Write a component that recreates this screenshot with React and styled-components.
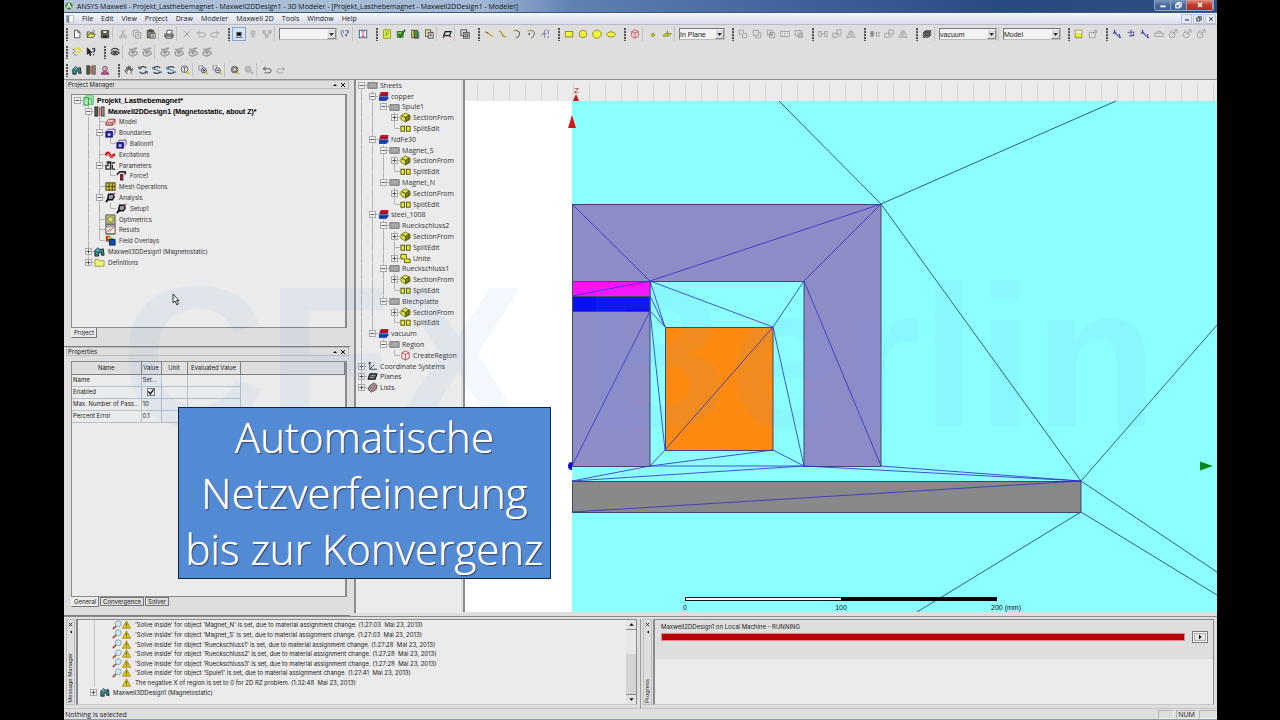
import React, { useState } from "react";
import styled, { createGlobalStyle } from "styled-components";

const GlobalStyle = createGlobalStyle`
  * { box-sizing: border-box; }
  html, body, #root { height: 100%; }
  body { margin: 0; background: #000; overflow: hidden; }
  button, select, input { font: inherit; color: inherit; margin: 0; padding: 0; }
  ul { list-style: none; margin: 0; padding: 0; }
`;

const Screen = styled.div`
  height: 100vh;
  padding: 0 63px 0 64px;
  background: #000;
`;

const Window = styled.div`
  position: relative;
  display: flex;
  flex-direction: column;
  height: 100%;
  overflow: hidden;
  background: #dedede;
  color: #222;
  font-family: Inter, "Liberation Sans", Arial, sans-serif;
  font-size: 6px;
  line-height: 9px;
`;

const TitleBar = styled.header`
  display: flex;
  align-items: center;
  flex: 0 0 13px;
  gap: 3px;
  padding: 0 3px 0 0;
  border-bottom: 1px solid #3c587e;
  background: linear-gradient(90deg, #b3c3d8 0%, #a3b9d6 36%, #5f82b3 44%, #3d6099 65%, #264b80 82%, #2c5080 100%);
  color: #111;
  font-family: "Open Sans", "Noto Sans", sans-serif;
  h1 {
    flex: 1;
    margin: 0;
    font-size: 7px;
    font-weight: 400;
    white-space: nowrap;
  }
`;

const WindowButtons = styled.div`
  display: flex;
  align-self: flex-start;
  border: 1px solid #8fa6c4;
  border-top: 0;
  border-radius: 0 0 3px 3px;
  overflow: hidden;
`;

const CaptionButton = styled.button`
  display: grid;
  place-items: center;
  width: ${(p) => (p.$close ? "26px" : "16px")};
  height: 10px;
  border: 0;
  border-right: 1px solid #8fa6c4;
  background: ${(p) =>
    p.$close
      ? "linear-gradient(#dd9588, #c23a28 50%, #b02a20)"
      : "linear-gradient(#7c98bd, #4a6c9a 50%, #3f628f)"};
`;

const MenuBar = styled.nav`
  display: flex;
  align-items: center;
  flex: 0 0 12px;
  padding: 0 1px 0 2px;
  border-bottom: 1px solid #b9bcc4;
  background: linear-gradient(#f4f6fb, #d8dcea);
  font-family: "Open Sans", "Noto Sans", sans-serif;
`;

const MenuItem = styled.button`
  margin-left: 8px;
  border: 0;
  background: none;
  font-size: 7px;
  line-height: 9px;
  white-space: nowrap;
`;

const MdiButtons = styled.div`
  display: flex;
  gap: 1px;
  margin-left: auto;
`;

const MdiButton = styled.button`
  display: grid;
  place-items: center;
  width: 11px;
  height: 10px;
  border: 1px solid #b9c4d8;
  background: #e4ebf6;
`;

const ToolRow = styled.div`
  display: flex;
  align-items: center;
  flex: 0 0 18px;
  overflow: hidden;
`;

const Grip = styled.span`
  flex: none;
  width: ${(p) => (p.$first ? "6px" : "10px")};
  height: 13px;
  padding-right: 2px;
  display: flex;
  justify-content: flex-end;
  &::before {
    content: "";
    width: 2px;
    background: repeating-linear-gradient(#555 0 2px, #c4c4c4 2px 3px);
  }
`;

const Divider = styled.span`
  flex: none;
  width: 4px;
  height: 14px;
  border-left: 1px solid #c2c2c2;
`;

const ToolButton = styled.button`
  display: grid;
  place-items: center;
  flex: none;
  width: 14px;
  height: 14px;
  border: ${(p) => (p.$on ? "1px solid #7fa6dc" : "0")};
  background: ${(p) => (p.$on ? "#d5e3f6" : "none")};
`;

const Combo = styled.label`
  display: flex;
  flex: none;
  width: ${(p) => p.$width};
  height: 12px;
  margin: 0 1px;
  border: 1px solid #777;
  border-right-color: #bbb;
  border-bottom-color: #bbb;
  background: #f3f3f3;
  select {
    flex: 1;
    min-width: 0;
    border: 0;
    appearance: none;
    background: none;
    font-family: "Liberation Sans", Arial, sans-serif;
    font-size: 7px;
    line-height: 9px;
  }
  span {
    display: grid;
    place-items: center;
    width: 9px;
    border: 1px solid #888;
    border-left-color: #eee;
    border-top-color: #eee;
    background: #dcdcdc;
  }
`;

const Work = styled.main`
  display: flex;
  flex: 1;
  min-height: 0;
  border-top: 1px solid #8f8f8f;
`;

const LeftDock = styled.aside`
  display: flex;
  flex-direction: column;
  flex: 0 0 286px;
`;

const Panel = styled.section`
  display: flex;
  flex-direction: column;
  flex: ${(p) => p.$share};
  min-height: 0;
  padding: 0 1px 8px 2px;
  border-bottom: 1px solid #808080;
`;

const PanelHeader = styled.div`
  display: flex;
  align-items: center;
  flex: 0 0 9px;
  gap: 2px;
  padding: 0 2px 0 1px;
  border: 1px solid #bdbdbd;
  h2 {
    flex: 1;
    margin: 0;
    font-size: 6px;
    line-height: 7px;
    font-weight: 400;
  }
`;

const TinyButton = styled.button`
  display: grid;
  place-items: center;
  width: 6px;
  height: 6px;
  border: 0;
  background: none;
`;

const PanelBody = styled.div`
  flex: 1;
  min-height: 0;
  margin: 5px 2px 0 5px;
  border: 1px solid #8a8a8a;
  border-right-width: 2px;
  background: #ebebeb;
  overflow: hidden;
`;

const Tabs = styled.div`
  display: flex;
  flex: 0 0 10px;
  align-items: flex-start;
  gap: 1px;
  padding-left: 5px;
`;

const Tab = styled.button`
  height: ${(p) => (p.$active ? "10px" : "9px")};
  padding: 0 2px;
  border: 1px solid #777;
  border-top: ${(p) => (p.$active ? "0" : "1px solid #777")};
  border-left-color: ${(p) => (p.$active ? "#eee" : "#777")};
  background: ${(p) => (p.$active ? "#ebebeb" : "#dedede")};
  line-height: 7px;
`;

const TreeDock = styled.aside`
  flex: 0 0 107px;
  margin: 0 2px 3px 4px;
  border-left: 2px solid #8c8c8c;
  background: #ebebeb;
  overflow: hidden;
`;

const line = "linear-gradient(#b4b4b4, #b4b4b4)";
const none = "linear-gradient(transparent, transparent)";

const TreeRow = styled.li`
  display: flex;
  align-items: center;
  height: 1.5vh;
  white-space: nowrap;
  font-family: ${(p) => (p.$ui ? '"Open Sans", "Noto Sans", sans-serif' : p.$bold ? '"Liberation Sans", Arial, sans-serif' : "inherit")};
  font-size: ${(p) => (p.$ui || p.$bold ? "7px" : "6px")};
  font-weight: ${(p) => (p.$bold ? 700 : 400)};
  color: ${(p) => (p.$bold ? "#000" : "#333")};
  > svg {
    flex: none;
    margin-right: ${(p) => (p.$ui ? "2px" : "3px")};
  }
`;

const Guide = styled.span`
  display: grid;
  place-items: center;
  align-self: stretch;
  flex: none;
  width: 11px;
  background-repeat: no-repeat;
  background-image: ${(p) => (p.$up ? line : none)}, ${(p) => (p.$down ? line : none)}, ${(p) => (p.$branch ? line : none)};
  background-position: 5px 0, 5px 100%, 100% 50%;
  background-size: 1px 50%, 1px 50%, 5px 1px;
`;

const Toggle = styled.button`
  display: grid;
  place-items: center;
  width: 7px;
  height: 7px;
  border: 1px solid #aaa;
  background: #f2f2f2;
`;

const Grid = styled.table`
  width: 100%;
  table-layout: fixed;
  border-collapse: collapse;
  line-height: 8px;
  th, td {
    height: 12px;
    padding: 0 1px;
    border-right: 1px solid #b4c0cc;
    border-bottom: 1px solid #b4c0cc;
    font-weight: 400;
    text-align: left;
    white-space: nowrap;
    overflow: hidden;
  }
  thead th {
    border-color: #808080;
    background: #dedede;
    text-align: center;
  }
  tbody td:last-child { border: 0; }
  input {
    display: block;
    margin: 0 auto;
    width: 8px;
    height: 8px;
    appearance: none;
    border: 1px solid #777;
    background: #fff;
  }
`;

const CheckCell = styled.label`
  display: grid;
  justify-content: center;
  > * { grid-area: 1 / 1; }
`;

const Viewport = styled.section`
  flex: 1;
  min-width: 0;
  margin-bottom: 4px;
  border-left: 2px solid #8c8c8c;
  background: #fff;
  overflow: hidden;
  svg {
    display: block;
    width: 100%;
    height: 100%;
  }
`;

const BottomDock = styled.div`
  display: flex;
  flex: 0 0 92px;
  min-height: 0;
  border-top: 1px solid #8a8a8a;
  padding-top: 2px;
`;

const DockPane = styled.section`
  display: flex;
  flex: 1;
  min-width: 0;
  padding: 0 3px 3px 2px;
  border-right: 1px solid #999;
  &:last-child {
    border-right: 0;
  }
`;

const SideStrip = styled.div`
  display: flex;
  flex-direction: column;
  align-items: center;
  flex: 0 0 9px;
  gap: 2px;
  padding: 1px 0;
  border: 1px solid #bdbdbd;
  h2 {
    margin: auto 0 0;
    font-family: "Liberation Sans", Arial, sans-serif;
    font-size: 6px;
    line-height: 7px;
    font-weight: 400;
    writing-mode: vertical-rl;
    transform: rotate(180deg);
    white-space: nowrap;
  }
`;

const DockBody = styled.div`
  display: flex;
  flex: 1;
  min-width: 0;
  margin-left: 1px;
  border: 1px solid #8a8a8a;
  border-left-width: 2px;
  border-bottom-color: #c8c8c8;
  background: #ebebeb;
`;

const MessageList = styled.ul`
  display: grid;
  flex: 1;
  grid-auto-rows: minmax(0, 1fr);
  min-height: 0;
  padding: 0 0 7px 34px;
  background: linear-gradient(#c4c4c4, #c4c4c4) 16px 0 / 1px 66px no-repeat;
  li {
    display: flex;
    align-items: center;
    min-height: 0;
    white-space: pre;
  }
  svg { flex: none; }
`;

const MessageText = styled.span`
  margin-left: 4px;
`;

const RootMessage = styled.li`
  margin-left: -22px;
  gap: 3px;
`;

const WarningIndent = styled.span`
  width: 10px;
`;

const ScrollBar = styled.div`
  display: flex;
  flex-direction: column;
  justify-content: space-between;
  width: 10px;
  background: linear-gradient(#e8e8e8 40%, #d4d4d4 40%);
  button {
    display: grid;
    place-items: center;
    height: 10px;
    border: 0;
    border-bottom: 1px solid #888;
    background: #e4e4e4;
  }
  button:last-child {
    border-bottom: 0;
    border-top: 1px solid #888;
  }
`;

const ProgressArea = styled.div`
  flex: 1;
  align-self: flex-start;
  padding: 3px 5px 16px 6px;
  background: #dedede;
  line-height: 8px;
`;

const ProgressRow = styled.div`
  display: flex;
  align-items: center;
  gap: 7px;
`;

const ProgressTrack = styled.div`
  flex: 1;
  height: 8px;
  border: 1px solid #e08a8a;
  background: #d8d8d8;
  div {
    height: 100%;
    background: #b90008;
  }
`;

const AbortButton = styled.button`
  display: grid;
  place-items: center;
  width: 16px;
  height: 12px;
  border: 1px solid #777;
  background: #e6e6e6;
  box-shadow: inset 0 0 0 1px #fff, inset 0 0 0 2px #aaa;
`;

const StatusBar = styled.footer`
  display: flex;
  align-items: center;
  flex: 0 0 12px;
  border-top: 1px solid #c4c4c4;
  border-bottom: 1px solid #8c9cb0;
  padding-left: 1px;
  font-family: "Open Sans", "Noto Sans", sans-serif;
  font-size: 7px;
  span:first-child { flex: 1; }
`;

const StatusCell = styled.span`
  width: ${(p) => p.$width};
  height: 9px;
  margin-left: 2px;
  border: 1px solid #b8b8b8;
  border-right-color: #eee;
  border-bottom-color: #eee;
  line-height: 8px;
  text-align: center;
`;

const Watermark = styled.div`
  position: absolute;
  left: 56px;
  top: 243px;
  color: rgba(90, 160, 240, 0.07);
  font-family: "Liberation Sans", Arial, sans-serif;
  font-size: 203px;
  line-height: 228px;
  font-weight: 700;
  white-space: nowrap;
  pointer-events: none;
`;

const Pointer = styled.svg`
  position: absolute;
  left: 108px;
  top: 293px;
  pointer-events: none;
`;

const Banner = styled.p`
  position: absolute;
  left: 114px;
  top: 407px;
  margin: 0;
  width: 373px;
  padding: 1px 0;
  border: 1px solid #14243c;
  background: #538ad4;
  color: #fff;
  font-family: "Open Sans", "Noto Sans", sans-serif;
  font-weight: 300;
  font-size: 42px;
  line-height: 56px;
  text-align: center;
  text-shadow: 0 0 1px #fff, 1px 1px 1px #1c3050;
`;

// small drawings on a 12 x 12 board, stroke colour comes from the caller
const box = (x, y, w, h, extra) => <rect x={x} y={y} width={w} height={h} {...extra} />;

const glyphs = {
  logo: <g><circle cx="6" cy="6" r="5" fill="#2c7a4c" stroke="#d8e4dc" /><path d="M3 9l3-6 3 6M4 7h4" stroke="#f0e8c0" strokeWidth="1.500" /></g>,
  doc: <g>{box(1, 1, 10, 10, { fill: "#fff", stroke: "#9ab" })}{box(1, 1, 4, 10, { fill: "#6b8f86", stroke: "none" })}</g>,
  page: <path d="M3 1.500h4l2.500 2.500v6.500H3zM7 1.500V4h2.500" fill="#fff" />,
  open: <g><path d="M1.500 10V3.500h3l1 1H9V6" fill="#e9e26a" /><path d="M1.500 10l2-4h7.500l-2 4z" fill="#f4ee5e" /><path d="M7.500 2.500q2-1.500 3 .5" /></g>,
  save: <g>{box(1.5, 2, 9, 8.5, { fill: "#6d7438" })}{box(3.5, 2, 5, 3.5, { fill: "#eee" })}{box(3.5, 7.5, 5, 3, { fill: "#222" })}</g>,
  cut: <g><path d="M4 1l3.500 7M8 1L4.500 8" /><circle cx="3.500" cy="9.500" r="1.500" /><circle cx="8.500" cy="9.500" r="1.500" /></g>,
  copy: <g>{box(1.5, 1.5, 6, 7)}{box(4.5, 4, 6, 7, { fill: "#dedede" })}<path d="M6 6.500h3M6 8.500h3" /></g>,
  paste: <g>{box(1.5, 2, 8, 8.5, { fill: "#8b8b78" })}{box(3.5, 1, 4, 2, { fill: "#555" })}{box(5, 5, 6, 6, { fill: "#eee" })}<path d="M6.500 7h3M6.500 9h3" /></g>,
  print: <g><path d="M3 6l1-4.500h6L9 6" fill="#fff" /><path d="M1 6h10v3.500H1z" fill="#999" />{box(2.5, 8.5, 7, 2.5, { fill: "#ddd" })}</g>,
  cross: <path d="M2 2l8 8M10 2l-8 8" />,
  undo: <path d="M4.500 2L1.500 4.500l3 2.500M1.500 4.500H8q3 0 3 2.500T8 9.500H3" />,
  redo: <path d="M7.500 2l3 2.500-3 2.500M10.500 4.500H4q-3 0-3 2.500t3 2.500h5" />,
  object: <g>{box(3.5, 4, 5, 4, { fill: "#111" })}<path d="M2 10h8" /></g>,
  bulb: <g><path d="M4 2.500h4v4l-1 1H5l-1-1z" fill="#ccc" /><path d="M4.500 9.500h3" /></g>,
  verts: <g><path d="M1 2h3v3H1zM8 2h3v3H8zM4 7h3v3H4zM3 5l2 2M9 5L7 7" /></g>,
  vars: <g><path d="M1 2h3v3M1 3l2 7M10 2L7 9M6 2h4v3" stroke="#50689a" /><path d="M6 6l2 3" stroke="#b03070" /></g>,
  infoBox: <g>{box(1.5, 1.5, 9, 9, { fill: "#f6f6ff", stroke: "#3d3d90" })}<path d="M4 3.500h4M6 5v4M4.500 9h3" stroke="#c02020" /></g>,
  listDoc: <g>{box(2, 1, 8, 10, { fill: "#eff13c", stroke: "#8a8a20" })}<path d="M4 3.500h4M4 5.500h4M4 7.500h3" stroke="#496" /></g>,
  checkDoc: <g><path d="M1.500 3h7v7h-7z" fill="#76c35d" stroke="#24621c" /><path d="M3 6l2 3 6-8" stroke="#1d5f1c" strokeWidth="2" /></g>,
  results: <g>{box(2, 1.5, 3, 9, { fill: "#e8e64c" })}{box(5, 1.5, 4, 9, { fill: "#3b9e4e" })}<path d="M10.500 3v8H5" /></g>,
  notes: <g>{box(2, 1, 6, 8, { fill: "#f2e9a0" })}{box(5, 4, 6, 7, { fill: "#ddd" })}<path d="M6.500 6h3M6.500 8h3" /></g>,
  analyze: <g><path d="M4 3h7l-2 5H2z" fill="#cdd" stroke="#222" strokeWidth="1.500" /><path d="M1 11l2-3M9 8l2 2" stroke="#a33" strokeWidth="1.500" /></g>,
  stack: <g>{box(1, 1, 7, 7)}{box(4, 4, 7, 7, { fill: "#ccc" })}{box(6, 6, 3, 3)}</g>,
  lineSeg: <g><path d="M1 3.500l3 1 4 3 3 1" stroke="#b4a820" strokeWidth="1.500" /><path d="M3 4l2 1" stroke="#333" /></g>,
  spline: <path d="M1 3q3-1 4 3t5 3" stroke="#a89e20" strokeWidth="1.500" />,
  arc: <g><path d="M4 1.500q6 1 5 5t-4 4" stroke="#333" /><path d="M2 2h2M4 10.500h2" stroke="#bdb520" strokeWidth="2" /></g>,
  arcDot: <g><path d="M5 1.500q6 1 5 5t-4 4" stroke="#555" /><circle cx="4" cy="6" r=".8" fill="#bb2" /><path d="M2 2h2" stroke="#bdb520" strokeWidth="2" /></g>,
  equation: <g><path d="M8 1q-3 0-3 5t2 5M3 5.500h5M10 1v5M10 8v3" stroke="#6a6a9e" /><path d="M1 7h2" stroke="#bb2" strokeWidth="2" /></g>,
  rect: box(1.5, 3, 9, 6.5, { fill: "#f5f83a", stroke: "#7f7f12" }),
  circle: <circle cx="6" cy="6" r="4.500" fill="#f5f83a" stroke="#7f7f12" />,
  polygon: <path d="M4 1.500h4l3 3v3l-3 3.500H4L1 8V4.500z" fill="#f5f83a" stroke="#7f7f12" />,
  ellipse: <ellipse cx="6" cy="6.500" rx="5" ry="3" fill="#f5f83a" stroke="#7f7f12" />,
  region: <path d="M6 1l4 2v6l-4 2-4-2V3zM2 3l4 2 4-2M6 5v6" stroke="#cf4a52" />,
  point: <circle cx="6" cy="7" r="1.800" fill="#e8ea2c" stroke="#777710" />,
  plane: <g><path d="M1 8.500l3-3h7l-3 3z" fill="#e8ea2c" stroke="#777710" /><path d="M6.500 2v6" stroke="#777710" /></g>,
  unite: <path d="M1.500 1.500h5v4h4v5h-5v-4h-4z" />,
  subtract: <g>{box(1.5, 1.5, 6, 6)}<path d="M7.500 4.500h3v6h-6v-3" /></g>,
  intersect: <g>{box(1.5, 1.5, 6, 6)}{box(4.5, 4.5, 6, 6)}{box(4.5, 4.5, 3, 3, { fill: "#aaa" })}</g>,
  splitSheet: <g>{box(1, 3, 10, 6)}<path d="M6 2v2M6 5v2M6 8v2" /></g>,
  imprint: <g>{box(1.5, 2, 7, 6)}{box(5, 5, 5, 5, { fill: "#bbb" })}</g>,
  move: <g>{box(1, 3, 3, 6)}{box(8, 3, 3, 6)}<path d="M4.500 6h3" /></g>,
  rotate: <g>{box(1, 5, 5, 5)}{box(6, 1, 5, 5)}<path d="M8 8.500h3" /></g>,
  mirror: <g><path d="M5 2v8H1zM7 2v8h4z" /></g>,
  dupMove: <g>{box(1, 3, 3, 6, { fill: "#888" })}<path d="M5 6h3" />{box(8, 4, 3, 5)}</g>,
  layers: <g><path d="M4 2h7l-3 3H1z" fill="#555" /><path d="M4 4.500h7l-3 3H1zM4 7h7l-3 3H1z" fill="#777" /></g>,
  yellowSheet: <g>{box(1.5, 1.5, 8, 9, { fill: "#e9ef30", stroke: "#7f8f20" })}{box(2, 2, 7, 3, { fill: "#eee", stroke: "none" })}</g>,
  export: <g>{box(1.5, 4, 7, 6.5)}<path d="M6 6l4-4M7 1.500h3.500V5" /></g>,
  csys: <g><path d="M3 1v4M1 5h4M3 3l3 4M6 8h2M9 6v3M8 10h3" strokeWidth="1.500" /></g>,
  csysB: <g><path d="M2 4h8M6 1v9M4 8h6M9 3v6" strokeDasharray="2 1" strokeWidth="1.500" /></g>,
  csysFlat: <g>{box(1, 5, 10, 4)}<path d="M4 5V3h4v2" /></g>,
  csysC: <g><circle cx="5" cy="7" r="3.500" /><path d="M5 7l5-5M7 1h4v4M3 2l2 1" /></g>,
  help: <g><path d="M4 3q3-3 5.500-.5T7 6.500V8M7 9.500v1.500" stroke="#e2dc3c" strokeWidth="2.200" /><path d="M1 8l3-3M3 9l2 1M1 3h2" stroke="#444" /></g>,
  whatsThis: <g><path d="M1.500 1v8l2-2 1.500 3.500 1-.5L4.500 6.500H7z" fill="#222" stroke="#222" /><path d="M7.500 3q3-2.500 3 0T9 6v1M9 8.500v1.500" stroke="#282878" strokeWidth="1.500" /></g>,
  eye: <g><path d="M1 4q5-5 10 0M1 7q5-4 10 0q-5 5-10 0" strokeWidth="1.500" /><circle cx="6" cy="7" r="1.800" fill="#555" /></g>,
  eyePick: <g><path d="M1 2.500q4 1 5 0t5-1M1 6.500q5-4 10 0v2q-5 4-9 1z" strokeWidth="1.600" /><circle cx="6" cy="7" r="1.500" fill="#999" /><path d="M7 5l3-3" /></g>,
  mx3d: <g><path d="M1 5l3-3 3 2 3-1 1 7H8V7H5v4H1z" fill="#3a8f78" stroke="#123" /><circle cx="4" cy="4" r="1.500" fill="#66a4e0" stroke="none" /></g>,
  mx2d: <g>{box(1, 1, 3, 10, { fill: "#3f6a4a", stroke: "#333" })}{box(5, 1, 2, 10, { fill: "#c56050", stroke: "none" })}{box(8, 1, 3, 10, { fill: "#8f9380", stroke: "#444" })}</g>,
  rmx: <g><circle cx="6" cy="4.500" r="3" fill="#bb8" stroke="#a03090" /><path d="M1.500 11q0-3 4.500-3t4.500 3z" fill="#d06080" stroke="#603060" /></g>,
  hand: <path d="M4 11L1 6.500 2 6l2 2-1-5h1l1 3V1.500h1V6l1-4h1L7.500 7 10 4l.5.5L8.500 9v2" fill="#e8e8e8" />,
  rotA: <g><path d="M10 4q-1-2-4-2T2 4M2 8q1 2 4 2t4-2" stroke="#2a3f52" strokeWidth="1.500" /><path d="M1 1.500v3h3M11 10.500v-3H8" stroke="#2a3f52" /></g>,
  rotC: <g><path d="M10 3.500Q9 2 6 2T2 4M2 8.500Q3 10 6 10t4-2" stroke="#2a3f52" strokeWidth="1.500" /><path d="M3 4.500l6 3M1 2v3h3M11 10V7" stroke="#2a5a82" /></g>,
  zoomDyn: <g><circle cx="5.500" cy="5" r="4" fill="#eee" /><path d="M5.500 3v5M4 4l1.500-1.500L7 4" /><path d="M8 8l3 3" stroke="#c9c222" strokeWidth="2" /></g>,
  zoomIn: <g>{box(1, 1, 5, 5, { strokeDasharray: "1 1" })}<circle cx="7" cy="6.500" r="3" fill="#ddd" /><path d="M5.500 6.500h3M7 5v3" stroke="#2222a0" /><path d="M9.500 9l2 2" stroke="#c9c222" strokeWidth="2" /></g>,
  zoomOut: <g>{box(1, 1, 5, 5, { strokeDasharray: "1 1" })}<circle cx="7" cy="6.500" r="3" fill="#ddd" /><path d="M5.500 6.500h3" stroke="#2222a0" /><path d="M9.500 9l2 2" stroke="#c9c222" strokeWidth="2" /></g>,
  fit: <g><circle cx="5.500" cy="5.500" r="4" fill="#e4e4d8" />{box(3.5, 3.5, 4, 4)}<path d="M8.500 8.500l2.500 2.500" stroke="#c9c222" strokeWidth="2" /></g>,
  fitOff: <g><circle cx="5" cy="5" r="3.500" />{box(3.5, 3.5, 3, 3)}<path d="M8 8l3 3" strokeWidth="1.500" /></g>,

  project: <g>{box(3, 1, 8, 9, { fill: "#d8f4d8", stroke: "#2cb84a" })}{box(1, 3, 5, 8, { fill: "#a8e8a8", stroke: "#2a9a40" })}<path d="M6 4h3v5" stroke="#2a9a40" /></g>,
  model: <g><path d="M1 6l3-3.500h7L8 6z" fill="#f2caca" stroke="#8c3f3f" /><path d="M1 6v3h7V6M8 9l3-3V2.500" fill="#d99" stroke="#8c3f3f" /></g>,
  boundary: <g>{box(1, 5, 7, 6, { fill: "#2c22a8", stroke: "#111166" })}{box(3, 7, 3, 2.5, { fill: "#ddf", stroke: "none" })}<path d="M3 5V2.500h8V7L8 9.500" fill="none" stroke="#5a50b8" /><path d="M8 2l3-1" stroke="#b99" /></g>,
  excite: <g><path d="M1 7q2-5 4-1t3 2 3-2" stroke="#cf1420" strokeWidth="3" /><path d="M2 7q2-3 3 0t5 1" stroke="#f2a0a0" /></g>,
  params: <g><path d="M2 2h4v8H1V6h3M7 3h4M8 5v5h3" stroke="#333" strokeWidth="1.500" /><circle cx="3.500" cy="3" r="1.500" fill="#444" /></g>,
  force: <g><path d="M1 5l3-3h6v3" stroke="#333" strokeWidth="2" fill="none" />{box(5, 5, 2.5, 6, { fill: "#a02244", stroke: "#5a1226" })}</g>,
  mesh: <g>{box(1, 2, 10, 8, { fill: "#d8d040", stroke: "#3c3408" })}<path d="M1 6h10M4.500 2v8M8 2v8" stroke="#5d4a10" strokeWidth="1.300" /></g>,
  wrench: <g><path d="M4 2.500h5l1 3-2 3H4L3 6z" fill="#99a" stroke="#111" strokeWidth="1.500" /><path d="M1 11l3-4" stroke="#111" strokeWidth="2" /><path d="M9 3l2-2" stroke="#a44" strokeWidth="1.500" /></g>,
  optim: <g>{box(1, 1, 10, 10, { fill: "#b4b88c", stroke: "#555" })}<circle cx="6" cy="6" r="3" fill="#e8e050" stroke="#684" /></g>,
  chart: <g>{box(1, 1, 10, 10, { fill: "#f2efe8", stroke: "#444" })}<path d="M1 3h10" stroke="#866" /><path d="M3 9l2-3 1 1 3-3" stroke="#a33" /><path d="M1.500 10.500h9" stroke="#584" /></g>,
  overlay: <g>{box(1, 1, 5, 6, { fill: "#d22", stroke: "none" })}{box(3, 3, 6, 5, { fill: "#3a4", stroke: "none" })}{box(3, 2, 3, 2, { fill: "#ec3", stroke: "none" })}{box(5, 5, 6, 6, { fill: "#1846c0", stroke: "#124" })}</g>,
  folder: <path d="M1 10V2.500h4l1 1.500h5v6z" fill="#eef07a" stroke="#9b9b38" />,
  sheet: box(1, 3, 10, 6, { fill: "#a8a8a8", stroke: "#6e6e6e" }),
  material: <g><path d="M3 1h8.500l-1 5H1z" fill="#c81428" stroke="none" /><path d="M1 6h10.500v2L9 11H1z" fill="#1c50c8" stroke="none" /><path d="M3 4h8" stroke="#6a0a30" /><path d="M2 8.500h8" stroke="#0a1c70" /></g>,
  section: <g><path d="M6 1l5 3v4l-5 3-5-3V4z" fill="#dfe33a" stroke="#7c7c24" /><path d="M6 6l4-3v5l-4 2z" fill="#84842c" stroke="#48480c" /><path d="M6 6L2 4" stroke="#38380c" /></g>,
  split: <g>{box(1, 3.5, 4, 5.5, { fill: "#e6ea38", stroke: "#54540c" })}{box(7, 3.5, 4, 5.5, { fill: "#e6ea38", stroke: "#54540c" })}</g>,
  join: <path d="M1 1.500h6v5h4v4H5v-4H1z" fill="#e6ea38" stroke="#54540c" />,
  axes: <path d="M3 1v8h8M3 9l5-5M1.500 3L3 1l1.500 2" stroke="#333" />,
  planes: <g><path d="M3 3h8l-2 6H1z" fill="#444" stroke="#111" /><path d="M4 5h5M3 7h5" stroke="#aaa" /></g>,
  lists: <path d="M3 4l5-3 3 3-1 4-5 3-4-3z" fill="#a08a90" stroke="#5a484c" />,
  magnifier: <g><path d="M1 11l4-4" stroke="#a05040" strokeWidth="2" /><circle cx="7.500" cy="4.500" r="3.500" fill="#cfeaf6" stroke="#7a99ac" /></g>,
  warning: <g><path d="M6 1l5.500 10H.5z" fill="#e3c81c" stroke="#9a8410" /><path d="M6 4v4M6 9v1" stroke="#222" /></g>,
  up: <path d="M2 8h8L6 4z" fill="#111" stroke="none" />,
  down: <path d="M2 4h8L6 8z" fill="#111" stroke="none" />,
  play: <path d="M4 1v10l5-5z" fill="#111" stroke="none" />,
  left: <path d="M8 3v6L4 6z" fill="#111" stroke="none" />,
  minimize: <path d="M2 8h8" strokeWidth="2.500" />,
  restore: <g>{box(1.5, 4, 6, 6)}<path d="M4 4V1.500h6.500V8H8" /></g>,
  minus: <path d="M1 6h10" />,
  plus: <path d="M1 6h10M6 1v10" />,
  tick: <path d="M2 5l3 4 5-7" />,
};

const Icon = ({ name, size = 11, color = "#444", weight = 1 }) => (
  <svg width={size} height={size} viewBox="0 0 12 12" fill="none" stroke={color} strokeWidth={weight} aria-hidden="true">
    {glyphs[name]}
  </svg>
);

// "|" is a divider, "#" a grip, "-name" a disabled tool, "+name" a pressed one
const toolRows = [
  [
    "#", "page", "open", "save", "|", "-cut", "-copy", "paste", "|", "print", "|", "-cross", "-undo", "-redo",
    "#", "+object", "-bulb", "-verts", "|", { label: "Selection", width: "58px", options: [""] }, "vars", "|", "infoBox",
    "#", "listDoc", "checkDoc", "results", "notes", "|", "analyze", "|", "stack",
    "#", "lineSeg", "spline", "arc", "arcDot", "equation",
    "#", "rect", "circle", "polygon", "ellipse",
    "#", "region", "|", "point", "plane", "|", { label: "Movement", width: "46px", options: ["In Plane", "3D"] },
    "#", "-unite", "-subtract", "-intersect", "-splitSheet", "-imprint",
    "#", "-move", "-rotate", "-mirror",
    "#", "-dupMove", "-rotate", "-mirror",
    "#", "layers", "|", { label: "Material", width: "58px", options: ["vacuum", "copper"] },
    "|", { label: "Kind", width: "58px", options: ["Model", "Non Model"] },
    "#", "yellowSheet", "-export",
    "#", "*csys", "*csysB", "*csys", "-csysFlat", "-csysC", "-csysC", "-csysC",
  ],
  ["#", "help", "whatsThis", "#", "eye", "|", "-eyePick", "-eyePick", "|", "-eyePick", "-eyePick", "-eyePick", "-eyePick"],
  [
    "#", "mx3d", "mx2d", "rmx", "#", "hand", "rotA", "rotC", "rotC", "zoomDyn", "|", "zoomIn", "zoomOut",
    "|", "fit", "-fitOff", "|", "undo", "-redo",
  ],
];

const inks = { "-": "#9c9c9c", "*": "#4848b0" };

const Tool = ({ item, first }) => {
  if (item === "#") return <Grip $first={first} />;
  if (item === "|") return <Divider />;
  if (item.options) {
    return (
      <Combo $width={item.width}>
        <select aria-label={item.label}>
          {item.options.map((o) => <option key={o}>{o}</option>)}
        </select>
        <span><Icon name="down" size={7} /></span>
      </Combo>
    );
  }
  const name = item.replace(/^[-+*]/, "");
  return (
    <ToolButton $on={item[0] === "+"} disabled={item[0] === "-"} aria-label={name}>
      <Icon name={name} color={inks[item[0]] || "#444"} size={10} />
    </ToolButton>
  );
};

// [level, toggle, icon, text]
const projectTree = [
  [0, "-", "project", "Projekt_Lasthebemagnet*", true],
  [1, "-", "mx2d", "Maxwell2DDesign1 (Magnetostatic, about Z)*", true],
  [2, "", "model", "Model"],
  [2, "-", "boundary", "Boundaries"],
  [3, "", "boundary", "Balloon1"],
  [2, "", "excite", "Excitations"],
  [2, "-", "params", "Parameters"],
  [3, "", "force", "Force1"],
  [2, "", "mesh", "Mesh Operations"],
  [2, "-", "wrench", "Analysis"],
  [3, "", "wrench", "Setup1"],
  [2, "", "optim", "Optimetrics"],
  [2, "", "chart", "Results"],
  [2, "", "overlay", "Field Overlays"],
  [1, "+", "mx3d", "Maxwell3DDesign1 (Magnetostatic)"],
  [1, "+", "folder", "Definitions"],
];

const sectioned = [[3, "+", "section", "SectionFrom"], [3, "", "split", "SplitEdit"]];

const modelTree = [
  [0, "-", "sheet", "Sheets"],
  [1, "-", "material", "copper"],
  [2, "-", "sheet", "Spule1"],
  ...sectioned,
  [1, "-", "material", "NdFe30"],
  [2, "-", "sheet", "Magnet_S"],
  ...sectioned,
  [2, "-", "sheet", "Magnet_N"],
  ...sectioned,
  [1, "-", "material", "steel_1008"],
  [2, "-", "sheet", "Rueckschluss2"],
  ...sectioned,
  [3, "+", "join", "Unite"],
  [2, "-", "sheet", "Rueckschluss1"],
  ...sectioned,
  [2, "-", "sheet", "Blechplatte"],
  ...sectioned,
  [1, "-", "material", "vacuum"],
  [2, "-", "sheet", "Region"],
  [3, "", "region", "CreateRegion"],
  [0, "+", "axes", "Coordinate Systems"],
  [0, "+", "planes", "Planes"],
  [0, "+", "lists", "Lists"],
];

const hasNext = (rows, index, level) => {
  for (let i = index + 1; i < rows.length; i++) {
    if (rows[i][0] === level) return true;
    if (rows[i][0] < level) return false;
  }
  return false;
};

const Tree = ({ rows, ui }) => (
  <ul>
    {rows.map(([level, toggle, icon, text, bold], i) => (
      <TreeRow key={i} $ui={ui} $bold={bold}>
        {Array.from({ length: level }, (_, k) => {
          const on = hasNext(rows, i, k);
          return <Guide key={k} $up={on} $down={on} />;
        })}
        <Guide $up={i > 0} $down={hasNext(rows, i, level)} $branch>
          {toggle && (
            <Toggle aria-label={text}>
              <Icon name={toggle === "+" ? "plus" : "minus"} size={5} weight={2} />
            </Toggle>
          )}
        </Guide>
        <Icon name={icon} />
        <span>{text}</span>
      </TreeRow>
    ))}
  </ul>
);

const change = "is set, due to material assignment change.";
const messages = [
  `'Solve inside' for object 'Magnet_N' ${change} (1:27:03  Mai 23, 2013)`,
  `'Solve inside' for object 'Magnet_S' ${change} (1:27:03  Mai 23, 2013)`,
  `'Solve inside' for object 'Rueckschluss1' ${change} (1:27:28  Mai 23, 2013)`,
  `'Solve inside' for object 'Rueckschluss2' ${change} (1:27:28  Mai 23, 2013)`,
  `'Solve inside' for object 'Rueckschluss3' ${change} (1:27:28  Mai 23, 2013)`,
  `'Solve inside' for object 'Spule1' ${change} (1:27:41  Mai 23, 2013)`,
];

// mesh edges in drawing units
const farEdges = [
  [416, 124, 314, 21], [416, 124, 651, 21], [416, 124, 616, 401], [616, 401, 752, 245],
  [616, 401, 752, 492], [616, 432, 752, 515], [616, 432, 452, 532],
];
const nearEdges = [
  [107, 124, 185, 201], [185, 201, 416, 124], [416, 124, 339, 201], [339, 201, 416, 386],
  [107, 386, 185, 231], [107, 216, 185, 201], [185, 201, 308, 247], [308, 247, 339, 201],
  [308, 247, 339, 386], [185, 201, 200, 247], [185, 216, 200, 247], [185, 231, 200, 247],
  [185, 231, 200, 370], [200, 370, 308, 247], [200, 370, 185, 386], [185, 386, 308, 370],
  [308, 370, 339, 386], [107, 401, 185, 386], [107, 401, 339, 386], [339, 386, 616, 401],
  [416, 386, 616, 401], [107, 432, 616, 401], [185, 386, 339, 386],
];

const ModelView = () => (
  <svg viewBox="0 0 752 532" preserveAspectRatio="xMinYMin slice" fontFamily="Liberation Sans" fontSize="7">
    <defs>
      <pattern id="ruler" width="16" height="21" patternUnits="userSpaceOnUse">
        <rect width="16" height="21" fill="#ebebeb" />
        <path d="M12.500 4v17" stroke="#d4d4d4" />
      </pattern>
    </defs>
    <rect width="2000" height="21" fill="url(#ruler)" />
    <rect x="107" y="21" width="2000" height="2000" fill="#8cffff" />
    <g stroke="#44446c" strokeWidth="1">
      <path d="M107.500 124.500h308.500v262h-77v-185h-154v185h-77.500z" fill="#8d8cc6" />
      <path d="M107.500 201.500h77.500v15h-77.500z" fill="#ff10ff" />
      <path d="M107.500 216.500h77.500v15h-77.500z" fill="#0c10f4" />
      <path d="M200.500 247.500h107.500v123h-107.500z" fill="#fc8a10" />
      <path d="M107.500 401.500h508.500v31h-508.500z" fill="#888" />
    </g>
    <g stroke="#2c5a92" strokeWidth="1">
      {farEdges.map(([a, b, c, d], i) => <line key={i} x1={a} y1={b} x2={c} y2={d} />)}
    </g>
    <g stroke="#3434c8" strokeWidth="1" strokeOpacity="0.85">
      {nearEdges.map(([a, b, c, d], i) => <line key={i} x1={a} y1={b} x2={c} y2={d} />)}
    </g>
    <path d="M103 48l4-13 4 13z" fill="#d01818" />
    <path d="M108 21l3-7 3 7z" fill="#c01818" />
    <text x="109" y="13" fontSize="8" fill="#c01818">Z</text>
    <path d="M107 382a4 4 0 0 0 0 8z" fill="#1010d8" />
    <path d="M735 381.500v9l13-4.500z" fill="#0a8a1c" />
    <rect x="220.500" y="517.500" width="156" height="3" fill="#fff" stroke="#111" />
    <rect x="376" y="517" width="156" height="4" fill="#000" />
    <g fill="#111" textAnchor="middle">
      <text x="220" y="530">0</text>
      <text x="376" y="530">100</text>
      <text x="541" y="530">200 (mm)</text>
    </g>
  </svg>
);

const HeaderButtons = () => (
  <>
    <TinyButton aria-label="Collapse"><Icon name="up" size={6} /></TinyButton>
    <TinyButton aria-label="Close"><Icon name="cross" size={6} color="#111" weight={2} /></TinyButton>
  </>
);

const App = () => {
  const [enabled, setEnabled] = useState(true);
  const menus = ["File", "Edit", "View", "Project", "Draw", "Modeler", "Maxwell 2D", "Tools", "Window", "Help"];

  return (
    <Screen>
      <GlobalStyle />
      <Window>
        <TitleBar>
          <Icon name="logo" size={10} />
          <h1>ANSYS Maxwell - Projekt_Lasthebemagnet - Maxwell2DDesign1 - 3D Modeler - [Projekt_Lasthebemagnet - Maxwell2DDesign1 - Modeler]</h1>
          <WindowButtons>
            <CaptionButton aria-label="Minimize"><Icon name="minimize" size={8} color="#fff" /></CaptionButton>
            <CaptionButton aria-label="Restore"><Icon name="restore" size={7} color="#fff" weight={2} /></CaptionButton>
            <CaptionButton $close aria-label="Close"><Icon name="cross" size={6} color="#fff" weight={3} /></CaptionButton>
          </WindowButtons>
        </TitleBar>
        <MenuBar>
          <Icon name="doc" size={8} />
          {menus.map((m) => <MenuItem key={m}>{m}</MenuItem>)}
          <MdiButtons>
            <MdiButton aria-label="Minimize view"><Icon name="minimize" size={6} /></MdiButton>
            <MdiButton aria-label="Restore view"><Icon name="restore" size={6} weight={2} /></MdiButton>
            <MdiButton aria-label="Close view"><Icon name="cross" size={6} weight={2} /></MdiButton>
          </MdiButtons>
        </MenuBar>
        {toolRows.map((row, r) => (
          <ToolRow key={r}>
            {row.map((item, i) => <Tool key={i} item={item} first={i === 0} />)}
          </ToolRow>
        ))}

        <Work>
          <LeftDock>
            <Panel $share={267}>
              <PanelHeader><h2>Project Manager</h2><HeaderButtons /></PanelHeader>
              <PanelBody><Tree rows={projectTree} /></PanelBody>
              <Tabs><Tab $active>Project</Tab></Tabs>
            </Panel>
            <Panel $share={269}>
              <PanelHeader><h2>Properties</h2><HeaderButtons /></PanelHeader>
              <PanelBody>
                <Grid>
                  <colgroup>
                    <col width="69" /><col width="20" /><col width="26" /><col width="53" /><col />
                  </colgroup>
                  <thead>
                    <tr><th>Name</th><th>Value</th><th>Unit</th><th>Evaluated Value</th><th aria-label="Description" /></tr>
                  </thead>
                  <tbody>
                    <tr><td>Name</td><td>Set...</td><td /><td /><td /></tr>
                    <tr>
                      <td>Enabled</td>
                      <td>
                        <CheckCell>
                          <input type="checkbox" aria-label="Enabled" checked={enabled} onChange={(e) => setEnabled(e.target.checked)} />
                          {enabled && <Icon name="tick" size={8} color="#111" weight={2} />}
                        </CheckCell>
                      </td>
                      <td /><td /><td />
                    </tr>
                    <tr><td>Max. Number of Pass...</td><td>10</td><td /><td /><td /></tr>
                    <tr><td>Percent Error</td><td>0.1</td><td /><td /><td /></tr>
                  </tbody>
                </Grid>
              </PanelBody>
              <Tabs>
                <Tab $active>General</Tab>
                <Tab>Convergence</Tab>
                <Tab>Solver</Tab>
              </Tabs>
            </Panel>
          </LeftDock>
          <TreeDock><Tree rows={modelTree} ui /></TreeDock>
          <Viewport><ModelView /></Viewport>
        </Work>

        <BottomDock>
          <DockPane>
            <SideStrip>
              <TinyButton aria-label="Close messages"><Icon name="cross" size={5} color="#111" weight={2} /></TinyButton>
              <TinyButton aria-label="Collapse messages"><Icon name="left" size={6} /></TinyButton>
              <h2>Message Manager</h2>
            </SideStrip>
            <DockBody>
              <MessageList>
                {messages.map((m) => (
                  <li key={m}>
                    <Icon name="magnifier" size={10} />
                    <Icon name="warning" size={9} />
                    <MessageText>{m}</MessageText>
                  </li>
                ))}
                <li>
                  <WarningIndent />
                  <Icon name="warning" size={9} />
                  <MessageText>{"The negative X of region is set to 0 for 2D RZ problem. (1:32:48  Mai 23, 2013)"}</MessageText>
                </li>
                <RootMessage>
                  <Toggle aria-label="Maxwell3DDesign1"><Icon name="plus" size={5} weight={2} /></Toggle>
                  <Icon name="mx3d" size={10} />
                  <span>Maxwell3DDesign1 (Magnetostatic)</span>
                </RootMessage>
              </MessageList>
              <ScrollBar>
                <button aria-label="Scroll up"><Icon name="up" size={7} /></button>
                <button aria-label="Scroll down"><Icon name="down" size={7} /></button>
              </ScrollBar>
            </DockBody>
          </DockPane>
          <DockPane>
            <SideStrip>
              <TinyButton aria-label="Close progress"><Icon name="cross" size={5} color="#111" weight={2} /></TinyButton>
              <TinyButton aria-label="Collapse progress"><Icon name="left" size={6} /></TinyButton>
              <h2>Progress</h2>
            </SideStrip>
            <DockBody>
              <ProgressArea>
                Maxwell2DDesign1 on Local Machine - RUNNING
                <ProgressRow>
                  <ProgressTrack role="progressbar" aria-label="Solve progress"><div /></ProgressTrack>
                  <AbortButton aria-label="Options"><Icon name="play" size={6} /></AbortButton>
                </ProgressRow>
              </ProgressArea>
            </DockBody>
          </DockPane>
        </BottomDock>
        <StatusBar>
          <span>Nothing is selected</span>
          <StatusCell $width="16px" />
          <StatusCell $width="21px">NUM</StatusCell>
          <StatusCell $width="18px" />
        </StatusBar>

        <Watermark aria-hidden="true">CFX Berlin</Watermark>
        <Pointer width="9" height="13" viewBox="0 0 9 13" fill="#fff" stroke="#333">
          <path d="M1 1v9l2-2 2 4 1.500-1-2-3.500H7z" />
        </Pointer>
        <Banner>Automatische<br />Netzverfeinerung<br />bis zur Konvergenz</Banner>
      </Window>
    </Screen>
  );
};

export default App;
